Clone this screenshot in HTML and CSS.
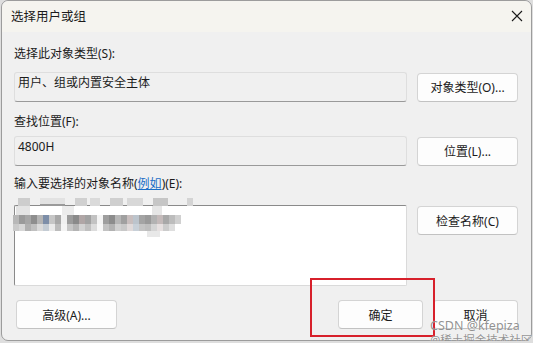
FILE: index.html
```html
<!DOCTYPE html>
<html lang="zh-CN">
<head>
<meta charset="UTF-8">
<meta name="viewport" content="width=device-width, initial-scale=1.0">
<title>选择用户或组</title>
<link rel="stylesheet" href="styles.css">
</head>
<body>
<div class="dialog">
    <div class="titlebar">
        <span class="title">选择用户或组</span>
        <svg class="close" width="12" height="12" viewBox="0 0 12 12">
            <path d="M1 1 L11 11 M11 1 L1 11" stroke="#1a1a1a" stroke-width="1.1" fill="none"/>
        </svg>
    </div>

    <div class="content">
        <p class="label label-first">选择此对象类型(S):</p>
        <div class="row">
            <div class="field">用户、组或内置安全主体</div>
            <button class="btn">对象类型(O)...</button>
        </div>

        <p class="label label-second">查找位置(F):</p>
        <div class="row">
            <div class="field">4800H</div>
            <button class="btn">位置(L)...</button>
        </div>

        <p class="label label-third">输入要选择的对象名称(<a class="link">例如</a>)(E):</p>
        <div class="row row-top">
            <div class="names">
                <!-- blurred names from the screenshot -->
                <svg class="mosaic" width="190" height="42" viewBox="0 0 190 42">
                    <rect x="6" y="0" width="12" height="8" fill="#cdcdcd"/>
                    <rect x="28" y="0" width="25" height="6" fill="#e2e2e2"/>
                    <rect x="28" y="6" width="25" height="2" fill="#9a9a9a"/>
                    <rect x="63" y="0" width="12" height="8" fill="#d0d0d0"/>
                    <rect x="78" y="0" width="10" height="8" fill="#dadada"/>
                    <rect x="98" y="0" width="13" height="8" fill="#cfcfcf"/>
                    <rect x="115" y="0" width="16" height="8" fill="#d8d8d8"/>
                    <rect x="141" y="0" width="15" height="8" fill="#c6c6c6"/>
                    <rect x="175" y="0" width="6" height="8" fill="#d4d4d4"/>
                    <rect x="4" y="8" width="14" height="9" fill="#e4e4e4"/>
                    <rect x="50" y="8" width="12" height="9" fill="#ececec"/>
                    <rect x="140" y="8" width="10" height="9" fill="#e6e6e6"/>
                    <g transform="translate(1 17)">
                        <rect x="0" width="6" height="9" fill="#b8b8b8"/>
                        <rect x="6" width="6" height="9" fill="#9a9a9a"/>
                        <rect x="12" width="6" height="9" fill="#a6a6a6"/>
                        <rect x="18" width="6" height="9" fill="#8e8e8e"/>
                        <rect x="24" width="6" height="9" fill="#b4b4b4"/>
                        <rect x="30" width="6" height="9" fill="#7d8ea8"/>
                        <rect x="36" width="6" height="9" fill="#c6c6c6"/>
                        <rect x="42" width="6" height="9" fill="#a8a8a8"/>
                        <rect x="48" width="6" height="9" fill="#f0f0f0"/>
                        <rect x="54" width="6" height="9" fill="#9c9c9c"/>
                        <rect x="60" width="6" height="9" fill="#8a8a8a"/>
                        <rect x="66" width="6" height="9" fill="#b0a6a6"/>
                        <rect x="72" width="6" height="9" fill="#a2a2a2"/>
                        <rect x="78" width="6" height="9" fill="#c2c2c2"/>
                        <rect x="84" width="6" height="9" fill="#f4f4f4"/>
                        <rect x="90" width="6" height="9" fill="#9e9e9e"/>
                        <rect x="96" width="6" height="9" fill="#8c8c8c"/>
                        <rect x="102" width="6" height="9" fill="#b6b6b6"/>
                        <rect x="108" width="6" height="9" fill="#a0a0a0"/>
                        <rect x="114" width="6" height="9" fill="#c8bebe"/>
                        <rect x="120" width="6" height="9" fill="#bcc4cc"/>
                        <rect x="126" width="6" height="9" fill="#a4a4a4"/>
                        <rect x="132" width="6" height="9" fill="#9a9a9a"/>
                        <rect x="138" width="6" height="9" fill="#b2b2b2"/>
                        <rect x="144" width="6" height="9" fill="#c4baba"/>
                        <rect x="150" width="6" height="9" fill="#a8a8a8"/>
                        <rect x="156" width="6" height="9" fill="#bcbcbc"/>
                        <rect x="162" width="6" height="9" fill="#d0d0d0"/>
                    </g>
                    <g transform="translate(1 26)">
                        <rect x="0" width="6" height="7" fill="#cacaca"/>
                        <rect x="6" width="6" height="7" fill="#d6d6d6"/>
                        <rect x="12" width="6" height="7" fill="#b0b0b0"/>
                        <rect x="18" width="6" height="7" fill="#c0c0c0"/>
                        <rect x="24" width="6" height="7" fill="#dadada"/>
                        <rect x="30" width="6" height="7" fill="#c4ccd4"/>
                        <rect x="36" width="6" height="7" fill="#eaeaea"/>
                        <rect x="42" width="6" height="7" fill="#bcbcbc"/>
                        <rect x="48" width="6" height="7" fill="#f4f4f4"/>
                        <rect x="54" width="6" height="7" fill="#c6c6c6"/>
                        <rect x="60" width="6" height="7" fill="#b4b4b4"/>
                        <rect x="66" width="6" height="7" fill="#d2d2d2"/>
                        <rect x="72" width="6" height="7" fill="#c0c0c0"/>
                        <rect x="78" width="6" height="7" fill="#dcdcdc"/>
                        <rect x="84" width="6" height="7" fill="#f8f8f8"/>
                        <rect x="90" width="6" height="7" fill="#c2c2c2"/>
                        <rect x="96" width="6" height="7" fill="#b2b2b2"/>
                        <rect x="102" width="6" height="7" fill="#d0d0d0"/>
                        <rect x="108" width="6" height="7" fill="#c8c8c8"/>
                        <rect x="114" width="6" height="7" fill="#e0dada"/>
                        <rect x="120" width="6" height="7" fill="#c8d0d8"/>
                        <rect x="126" width="6" height="7" fill="#c4c4c4"/>
                        <rect x="132" width="6" height="7" fill="#bebebe"/>
                        <rect x="138" width="6" height="7" fill="#d4d4d4"/>
                        <rect x="144" width="6" height="7" fill="#e6e0e0"/>
                        <rect x="150" width="6" height="7" fill="#cccccc"/>
                        <rect x="156" width="6" height="7" fill="#dedede"/>
                    </g>
                    <rect x="135" y="33" width="13" height="6" fill="#e8e8e8"/>
                </svg>
            </div>
            <button class="btn btn-check">检查名称(C)</button>
        </div>

        <div class="footer">
            <button class="btn">高级(A)...</button>
            <div class="actions">
                <button class="btn btn-small">确定</button>
                <button class="btn btn-small">取消</button>
            </div>
        </div>
    </div>

    <div class="highlight"></div>
    <div class="watermark">
        <span>CSDN @kfepiza</span>
        <span class="watermark-sub">@稀土掘金技术社区</span>
    </div>
</div>
</body>
</html>
```

FILE: styles.css
```css
body {
    margin: 0;
    padding: 0;
    background-color: #dedede;
    font-family: "Noto Sans", "Noto Sans CJK SC", sans-serif;
    font-size: 12px;
    color: #1b1b1b;
    overflow: hidden;
}

.dialog {
    position: relative;
    width: 529px;
    height: 339px;
    margin-left: 1px;
    background-color: #f0f0f0;
    border: 1px solid #9c9c9c;
    border-radius: 7px;
}

.titlebar {
    height: 31px;
    display: flex;
    justify-content: space-between;
    align-items: center;
    padding: 0 8px 0 9px;
    background-color: #f5f4ef;
    border-radius: 7px 7px 0 0;
}

.title {
    font-size: 12.5px;
    margin-top: -2px;
}

.close {
    margin-top: -2px;
}

.content {
    padding: 14px 13px 0 12px;
}

.label {
    margin: 0;
    height: 16px;
    line-height: 16px;
}

.label-first {
    margin-bottom: 10px;
}

.label-second {
    margin-top: 12px;
    margin-bottom: 6px;
}

.label-third {
    margin-top: 10px;
    margin-bottom: 13px;
}

.link {
    color: #1a6dc6;
    text-decoration: underline;
}

.row {
    display: flex;
    align-items: center;
    gap: 10px;
}

.row-top {
    align-items: flex-start;
}

.field {
    flex: 1;
    box-sizing: border-box;
    height: 30px;
    padding: 2px 3px;
    line-height: 16px;
    background-color: #f0f0f0;
    border: 1px solid #dedede;
    border-bottom-color: #9a9a9a;
    border-radius: 3px;
}

.names {
    position: relative;
    flex: 1;
    height: 81px;
    box-sizing: border-box;
    background-color: #fff;
    border: 1px solid #dadada;
    border-top-color: #8a8a8a;
    border-left-color: #8a8a8a;
    border-radius: 2px;
}

.mosaic {
    position: absolute;
    left: -3px;
    top: -8px;
}

.btn {
    width: 101px;
    height: 29px;
    padding: 0;
    font-family: inherit;
    font-size: 12px;
    color: #1b1b1b;
    background-color: #fdfdfd;
    border: 1px solid #d4d4d4;
    border-bottom-color: #c2c2c2;
    border-radius: 4px;
}

.btn-check {
    margin-top: 1px;
}

.btn-small {
    width: 85px;
}

.footer {
    display: flex;
    justify-content: space-between;
    align-items: center;
    margin-top: 14px;
    padding-left: 2px;
}

.actions {
    display: flex;
    gap: 10px;
}

.highlight {
    position: absolute;
    left: 308px;
    top: 277px;
    width: 121px;
    height: 55px;
    border: 2px solid #d7202b;
}

.watermark {
    position: absolute;
    left: 428px;
    top: 318px;
    display: flex;
    flex-direction: column;
    line-height: 13px;
    color: rgba(110, 110, 110, 0.75);
    text-shadow: 0 0 1px #fff;
}

.watermark span {
    font-size: 12.5px;
    white-space: nowrap;
}

.watermark .watermark-sub {
    font-size: 11.5px;
    margin-top: 1px;
}
```
